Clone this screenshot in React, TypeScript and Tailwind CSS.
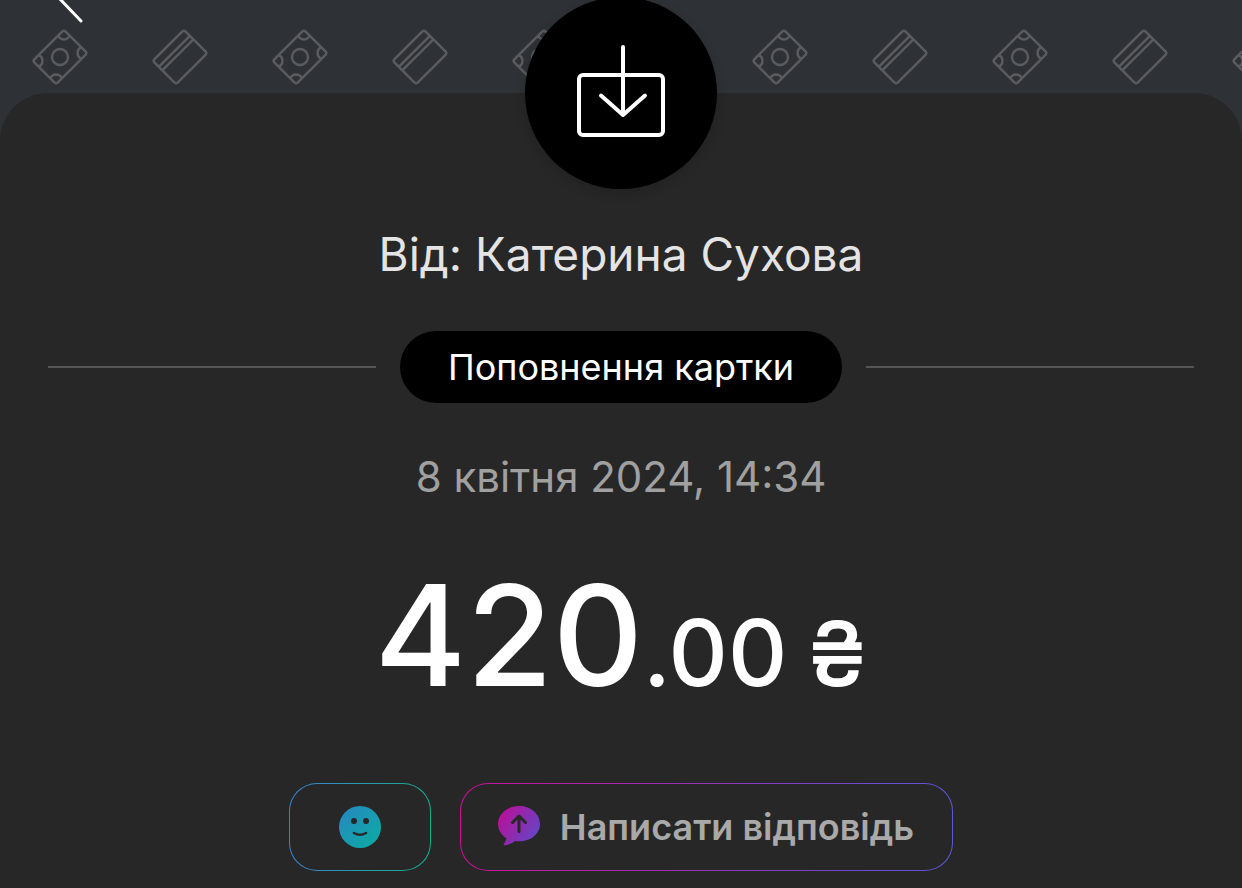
function BanknoteIcon() {
  return (
    <svg viewBox="0 0 56 56" className="size-14" fill="none" stroke="currentColor" strokeWidth="2.4" aria-hidden="true">
      <g transform="rotate(-45 28 28)">
        <rect x="6" y="11.5" width="44" height="33" rx="2.5" />
        <path d="M14 11.5A6 6 0 0 1 6 19.5M42 11.5A6 6 0 0 0 50 19.5M6 36.5A6 6 0 0 1 14 44.5M50 36.5A6 6 0 0 0 42 44.5" />
      </g>
      <circle cx="28" cy="28" r="8" />
    </svg>
  );
}

function CardIcon() {
  return (
    <svg viewBox="0 0 56 56" className="size-14" fill="none" stroke="currentColor" strokeWidth="2.4" aria-hidden="true">
      <g transform="rotate(-45 28 28)">
        <rect x="6" y="11.5" width="44" height="33" rx="2.5" />
        <path d="M6 20H50M6 25H50" />
      </g>
    </svg>
  );
}

function DepositIcon() {
  return (
    <svg viewBox="0 0 96 96" className="size-24" fill="none" stroke="#fff" strokeWidth="4" strokeLinecap="round" strokeLinejoin="round" aria-hidden="true">
      <rect x="6" y="30" width="84" height="60" rx="4" />
      <path d="M50 2V70M28 50.5L50 70L72 50.5" />
    </svg>
  );
}

function SmileIcon() {
  return (
    <svg viewBox="0 0 42 42" className="size-[42px]" aria-hidden="true">
      <defs>
        <linearGradient id="smile-fill" x1="0" y1="0" x2="1" y2="1">
          <stop offset="0" stopColor="#2787c4" />
          <stop offset="1" stopColor="#0bada0" />
        </linearGradient>
      </defs>
      <circle cx="21" cy="21" r="21" fill="url(#smile-fill)" />
      <circle cx="15" cy="15" r="3" fill="#272727" />
      <circle cx="27" cy="15" r="3" fill="#272727" />
      <path d="M15 27Q21 30.5 27 27" fill="none" stroke="#272727" strokeWidth="2.6" strokeLinecap="round" />
    </svg>
  );
}

function ReplyIcon() {
  return (
    <svg viewBox="0 0 42 42" className="size-[42px]" aria-hidden="true">
      <defs>
        <linearGradient id="reply-fill" x1="0" y1="0.2" x2="1" y2="0.8">
          <stop offset="0" stopColor="#bb0f98" />
          <stop offset="1" stopColor="#6048c8" />
        </linearGradient>
      </defs>
      <path
        d="M21 0C9 0 0 8 0 18c0 6 3.5 11 8.5 14.2-.5 2.2-1.5 4-2.5 5.2-.8 1 0 2 1.2 1.8 4.3-.6 7.8-2.5 9.8-4.2 1.3.2 2.7.3 4 .3 12 0 21-7.5 21-17.3S33 0 21 0z"
        fill="url(#reply-fill)"
      />
      <path d="M21 25.5V10.5M14.5 16.5L21 10L27.5 16.5" fill="none" stroke="#272727" strokeWidth="3" strokeLinecap="round" strokeLinejoin="round" />
    </svg>
  );
}

const tiles = Array.from({ length: 24 }, (_, i) => i);

export default function App() {
  return (
    <div className="relative min-h-screen overflow-hidden bg-[#2e3135] font-['Inter','Noto_Sans',sans-serif]">
      <header className="flex h-[93px] overflow-hidden pt-[29px] text-[#5a5c5f]">
        {tiles.map((i) => (
          <div key={i} className="flex w-[120px] shrink-0 justify-center">
            {i % 2 === 0 ? <BanknoteIcon /> : <CardIcon />}
          </div>
        ))}
      </header>

      <button type="button" aria-label="Назад" className="absolute -top-6 left-9 text-white">
        <svg viewBox="0 0 48 48" className="size-12" fill="none" stroke="currentColor" strokeWidth="3" strokeLinecap="round" aria-hidden="true">
          <path d="M45 0L23 22L45 45" />
        </svg>
      </button>

      <main className="flex min-h-[795px] flex-col items-center rounded-t-[48px] bg-[#272727] px-12">
        <div className="-mt-24 flex size-48 items-center justify-center rounded-full bg-black shadow-[0_4px_12px_rgba(0,0,0,0.15)]">
          <DepositIcon />
        </div>

        <h1 className="mt-9 text-[46px] leading-[58px] text-[#e4e4e4]">Від: Катерина Сухова</h1>

        <div className="mt-12 flex items-center gap-6 self-stretch">
          <span className="h-0.5 flex-1 bg-[#555555]" />
          <span className="rounded-full bg-black px-12 text-4xl leading-[72px] text-white">Поповнення картки</span>
          <span className="h-0.5 flex-1 bg-[#555555]" />
        </div>

        <p className="mt-12 text-[42px] leading-[52px] text-[#a0a0a0]">8 квітня 2024, 14:34</p>

        <p className="mt-12 flex items-baseline text-[140px] leading-[168px] font-medium text-white">
          420
          <span className="text-[92px] leading-none">.00</span>
          <span className="ml-5 text-[90px] leading-none">₴</span>
        </p>

        <div className="mt-16 flex gap-[29px]">
          <button
            type="button"
            aria-label="Додати реакцію"
            className="flex h-[88px] w-[142px] items-center justify-center rounded-[28px] border border-transparent [background:linear-gradient(#272727,#272727)_padding-box,linear-gradient(90deg,#3d80d0,#12b08c)_border-box]"
          >
            <SmileIcon />
          </button>
          <button
            type="button"
            className="flex h-[88px] items-center gap-5 rounded-[28px] border border-transparent pr-[38px] pl-[37px] text-4xl font-semibold text-[#a9a9a9] [background:linear-gradient(#272727,#272727)_padding-box,linear-gradient(90deg,#cc1098,#5a58d8)_border-box]"
          >
            <ReplyIcon />
            Написати відповідь
          </button>
        </div>
      </main>
    </div>
  );
}
